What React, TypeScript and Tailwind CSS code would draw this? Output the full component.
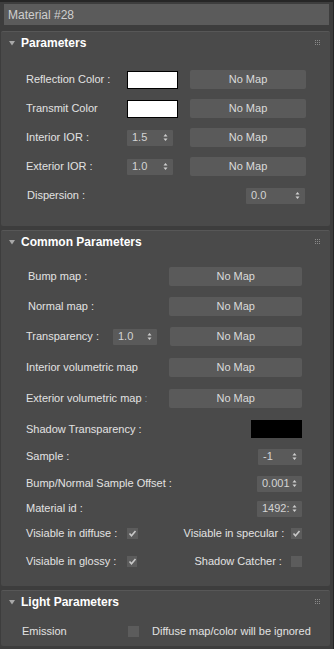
import React from 'react';

const Grip = () => (
  <svg width="6" height="6" viewBox="0 0 6 6" className="block">
    {[0, 2, 4].map((y) =>
      [0, 2, 4].map((x) => <rect key={`${x}-${y}`} x={x} y={y} width="1" height="1" fill="#8a8a8a" />)
    )}
  </svg>
);

const Arrows = () => (
  <svg width="5" height="9" viewBox="0 0 5 9" className="block">
    <path d="M2.5 1 L4.5 3.5 L0.5 3.5 Z" fill="#d0d0d0" />
    <path d="M2.5 8 L4.5 5.5 L0.5 5.5 Z" fill="#d0d0d0" />
  </svg>
);

const Spinner = ({ value, className }: { value: string; className: string }) => (
  <div className={`flex h-[16px] items-center justify-between rounded-[1px] bg-[#5a5a5a] pl-[5px] pr-[5px] text-[#d4d4d4] ${className}`}>
    <span className="leading-none">{value}</span>
    <Arrows />
  </div>
);

const NoMap = ({ className }: { className: string }) => (
  <div className={`flex h-[19px] items-center justify-center rounded-[2px] bg-[#5a5a5a] text-[#dadada] ${className}`}>
    No Map
  </div>
);

const Check = ({ checked }: { checked: boolean }) => (
  <div className="flex h-[11px] w-[11px] items-center justify-center bg-[#5c5c5c]">
    {checked && (
      <svg width="9" height="9" viewBox="0 0 9 9">
        <path d="M1.5 4.5 L3.5 6.8 L7.5 2" stroke="#c8c8c8" strokeWidth="1.6" fill="none" />
      </svg>
    )}
  </div>
);

const Panel = ({ title, children }: { title: string; children: React.ReactNode }) => (
  <div className="mx-[1px] rounded-[2px] border-t border-[#575757] bg-[#4a4a4a]">
    <div className="flex h-[22px] items-center pl-[8px] pr-[9px]">
      <svg width="6" height="5" viewBox="0 0 6 5" className="block">
        <path d="M0 0 L6 0 L3 4.5 Z" fill="#a8a8a8" />
      </svg>
      <span className="ml-[6px] text-[12px] font-bold text-white">{title}</span>
      <div className="ml-auto">
        <Grip />
      </div>
    </div>
    {children}
  </div>
);

export default function App() {
  return (
    <div className="h-[649px] w-[334px] overflow-hidden border-r border-[#262626] bg-[#3d3d3d] font-['Liberation_Sans',Arial,sans-serif] text-[11px] text-[#e2e2e2]">
      <div className="h-[2px] bg-[#262626]" />
      <div className="mx-[4px] mt-[2px] flex h-[21px] items-center bg-[#5b5b5b] pl-[4px] text-[12px] text-[#cfcfcf]">
        Material #28
      </div>
      <div className="mt-[6px] flex flex-col gap-[4px] pr-[2px]">
        <Panel title="Parameters">
          <div className="pb-[16px] pl-[25px] pt-[11px]">
            <div className="flex h-[29px] items-center">
              <span className="w-[101px]">Reflection Color :</span>
              <div className="h-[18px] w-[51px] border border-black bg-white" />
              <NoMap className="ml-[12px] w-[116px]" />
            </div>
            <div className="flex h-[29px] items-center">
              <span className="w-[101px]">Transmit Color</span>
              <div className="h-[18px] w-[51px] border border-black bg-white" />
              <NoMap className="ml-[12px] w-[116px]" />
            </div>
            <div className="flex h-[29px] items-center">
              <span className="w-[101px]">Interior IOR :</span>
              <Spinner value="1.5" className="w-[46px]" />
              <NoMap className="ml-[17px] w-[116px]" />
            </div>
            <div className="flex h-[29px] items-center">
              <span className="w-[101px]">Exterior IOR :</span>
              <Spinner value="1.0" className="w-[46px]" />
              <NoMap className="ml-[17px] w-[116px]" />
            </div>
            <div className="flex h-[29px] items-center">
              <span className="w-[220px] pl-[1px]">Dispersion :</span>
              <Spinner value="0.0" className="w-[59px]" />
            </div>
          </div>
        </Panel>
        <Panel title="Common Parameters">
          <div className="pb-[11px] pl-[25px] pr-[28px] pt-[8px]">
            <div className="flex h-[30px] items-center">
              <span className="w-[145px] pl-[2px]">Bump map :</span>
              <NoMap className="w-[134px]" />
            </div>
            <div className="flex h-[30px] items-center">
              <span className="w-[145px] pl-[2px]">Normal map :</span>
              <NoMap className="w-[134px]" />
            </div>
            <div className="flex h-[31px] items-center">
              <span className="w-[88px]">Transparency :</span>
              <Spinner value="1.0" className="w-[44px] pl-[4px]" />
              <NoMap className="ml-[13px] w-[134px]" />
            </div>
            <div className="flex h-[31px] items-center">
              <span className="w-[145px]">Interior volumetric map</span>
              <NoMap className="w-[134px]" />
            </div>
            <div className="flex h-[31px] items-center">
              <span className="w-[145px]">Exterior volumetric map <span className="text-[#7a8a9a]">:</span></span>
              <NoMap className="w-[134px]" />
            </div>
            <div className="flex h-[30px] items-center justify-between">
              <span>Shadow Transparency :</span>
              <div className="h-[18px] w-[51px] bg-black" />
            </div>
            <div className="flex h-[25px] items-center justify-between">
              <span>Sample :</span>
              <Spinner value="-1" className="w-[44px]" />
            </div>
            <div className="flex h-[29px] items-center justify-between">
              <span>Bump/Normal Sample Offset :</span>
              <Spinner value="0.001" className="w-[45px] pl-[3px] pr-[3px]" />
            </div>
            <div className="flex h-[21px] items-center justify-between">
              <span>Material id :</span>
              <Spinner value="1492:" className="w-[45px] pl-[4px] pr-[3px]" />
            </div>
            <div className="flex h-[28px] items-center">
              <span className="w-[102px]">Visiable in diffuse :</span>
              <Check checked />
              <span className="ml-[46px] w-[109px]">Visiable in specular :</span>
              <Check checked />
            </div>
            <div className="flex h-[28px] items-center">
              <span className="w-[102px]">Visiable in glossy :</span>
              <Check checked />
              <span className="ml-[57px] w-[98px]">Shadow Catcher :</span>
              <Check checked={false} />
            </div>
          </div>
        </Panel>
        <Panel title="Light Parameters">
          <div className="pl-[21px] pt-[3px]">
            <div className="flex h-[30px] items-center">
              <span className="w-[106px]">Emission</span>
              <Check checked={false} />
              <span className="ml-[13px]">Diffuse map/color will be ignored</span>
            </div>
          </div>
        </Panel>
      </div>
    </div>
  );
}
